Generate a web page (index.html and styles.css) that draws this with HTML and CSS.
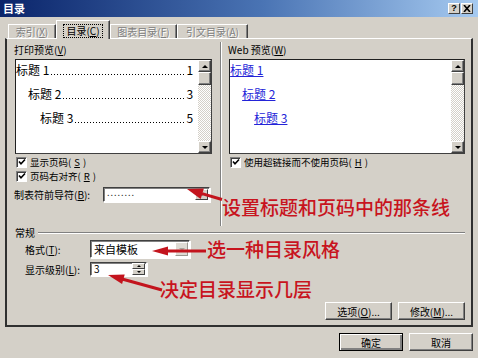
FILE: index.html
```html
<!DOCTYPE html>
<html lang="zh-CN">
<head>
  <meta charset="UTF-8"/>
  <title>目录</title>
  <link rel="stylesheet" href="styles.css">
</head>
<body>
<div class="window">

  <div class="titlebar">
    <span class="title">目录</span>
    <div class="caption-btns">
      <span class="cbtn">?</span>
      <span class="cbtn">
        <svg viewBox="0 0 8 7" width="8" height="7"><path d="M1,0 L7,7 M7,0 L1,7" stroke="#000" stroke-width="1.6"/></svg>
      </span>
    </div>
  </div>

  <div class="tabs">
    <span class="tab off t1">索引(<u>X</u>)</span>
    <span class="tab on t2"><span class="focus">目录(<u>C</u>)</span></span>
    <span class="tab off t3">图表目录(<u>F</u>)</span>
    <span class="tab off t4">引文目录(<u>A</u>)</span>
  </div>

  <div class="panel">
    <div class="top">
      <!-- print preview column -->
      <div class="col col-print">
        <div class="label">打印预览(<u>V</u>)</div>
        <div class="preview">
          <div class="pv-body">
            <div class="toc lv1"><span>标题 1</span><i class="dots"></i><span class="pg">1</span></div>
            <div class="toc lv2"><span>标题 2</span><i class="dots"></i><span class="pg">3</span></div>
            <div class="toc lv3"><span>标题 3</span><i class="dots"></i><span class="pg">5</span></div>
          </div>
          <div class="scrollbar">
            <span class="sbtn up"></span>
            <span class="sthumb"></span>
            <span class="strack"></span>
            <span class="sbtn down"></span>
          </div>
        </div>
        <div class="check first"><span class="box"><svg viewBox="0 0 8 8" width="8" height="8"><path d="M1,3.5 L3,5.8 L7,1.5" stroke="#000" stroke-width="1.6" fill="none"/></svg></span>显示页码(<u>S</u>)</div>
        <div class="check"><span class="box"><svg viewBox="0 0 8 8" width="8" height="8"><path d="M1,3.5 L3,5.8 L7,1.5" stroke="#000" stroke-width="1.6" fill="none"/></svg></span>页码右对齐(<u>R</u>)</div>
        <div class="field leader-row">
          <span class="flabel">制表符前导符(<u>B</u>):</span>
          <div class="combo leader"><span class="cval">........</span><span class="drop"></span></div>
        </div>
      </div>

      <div class="sep"></div>

      <!-- web preview column -->
      <div class="col col-web">
        <div class="label">Web 预览(<u>W</u>)</div>
        <div class="preview">
          <div class="pv-body">
            <div class="toc lv1"><a>标题 1</a></div>
            <div class="toc lv2"><a>标题 2</a></div>
            <div class="toc lv3"><a>标题 3</a></div>
          </div>
          <div class="scrollbar">
            <span class="sbtn up"></span>
            <span class="sthumb"></span>
            <span class="strack"></span>
            <span class="sbtn down"></span>
          </div>
        </div>
        <div class="check first"><span class="box"><svg viewBox="0 0 8 8" width="8" height="8"><path d="M1,3.5 L3,5.8 L7,1.5" stroke="#000" stroke-width="1.6" fill="none"/></svg></span>使用超链接而不使用页码(<u>H</u>)</div>
        <div class="note note-leader">设置标题和页码中的那条线</div>
      </div>
    </div>

    <!-- general group -->
    <div class="group">
      <div class="legend"><span>常规</span></div>
      <div class="field fmt-row">
        <span class="flabel">格式(<u>T</u>):</span>
        <div class="combo fmt"><span class="cval">来自模板</span><span class="drop pale"></span></div>
        <span class="note note-fmt">选一种目录风格</span>
      </div>
      <div class="field lvl-row">
        <span class="flabel">显示级别(<u>L</u>):</span>
        <div class="spin"><span class="cval">3</span><span class="spin-btns"><span class="sbtn up"></span><span class="sbtn down"></span></span></div>
      </div>
      <div class="note note-levels">决定目录显示几层</div>
      <div class="actions">
        <span class="btn">选项(<u>O</u>)...</span>
        <span class="btn">修改(<u>M</u>)...</span>
      </div>
    </div>
  </div>

  <div class="footer">
    <span class="btn default">确定</span>
    <span class="btn">取消</span>
  </div>

  <!-- red annotation arrows -->
  <svg class="arrows" viewBox="0 0 478 358" width="478" height="358">
    <g fill="#c3141d" stroke="#c3141d">
      <path d="M202,193.6 L222,199.5" stroke-width="3" fill="none"/>
      <polygon points="187,189 203.9,188.4 200.7,199" stroke="none"/>
      <path d="M166,251 L206,251" stroke-width="3" fill="none"/>
      <polygon points="152,251 168,246.5 168,255.5" stroke="none"/>
      <path d="M122,279 L162,290" stroke-width="3" fill="none"/>
      <polygon points="108,275 124.7,274.5 122.1,284.1" stroke="none"/>
    </g>
  </svg>
</div>
</body>
</html>
```

FILE: styles.css
```css
/* --- Reset & base --- */
* { box-sizing: border-box; margin: 0; padding: 0; }
body {
  background: #d4d0c8;
  font-family: "Noto Sans CJK SC", "Liberation Sans", sans-serif;
  font-size: 10px;
  color: #000;
}
u { text-decoration: underline; }

.window {
  position: relative;
  width: 478px; height: 358px;
  overflow: hidden;
}

/* --- Title bar --- */
.titlebar {
  height: 17px;
  display: flex; align-items: center; justify-content: space-between;
  padding: 0 5px 0 3px;
  background: linear-gradient(90deg, #0a246a 0%, #4a74b4 55%, #a6caf0 100%);
}
.title { color: #fff; font-weight: bold; font-size: 11px; line-height: 17px; }
.caption-btns { display: flex; gap: 1px; }
.cbtn {
  width: 12px; height: 11px;
  display: flex; align-items: center; justify-content: center;
  background: #d4d0c8;
  border: 1px solid; border-color: #fff #404040 #404040 #fff;
  font: bold 9px "Liberation Sans", sans-serif;
  line-height: 9px;
}

/* --- Tabs --- */
.tabs {
  display: flex; align-items: flex-end;
  height: 20px; margin-top: 1px;
  padding-left: 8px;
}
.tab {
  height: 14px;
  line-height: 13px;
  text-align: center;
  border-top: 1px solid #fff;
  border-left: 1px solid #fff;
  border-right: 1px solid #404040;
  box-shadow: inset -1px 0 #808080;
  white-space: nowrap;
}
.tab.off { color: #808080; text-shadow: 1px 1px 0 #fff; }
.tab.on {
  height: 19px; margin-bottom: -1px;
  padding-top: 3px;
  background: #d4d0c8;
  z-index: 2;
}
.focus { outline: 1px dotted #000; outline-offset: 0; padding: 0 2px; display: inline-block; line-height: 12px; }
.t1 { width: 48px; }
.t2 { width: 54px; }
.t3 { width: 67px; }
.t4 { width: 71px; }

/* --- Tab panel --- */
.panel {
  margin: 0 5px;
  height: 289px;
  border-style: solid;
  border-width: 1px 2px 2px 2px;
  border-color: #fff #303030 #303030 #303030;
  padding: 0 6px 0 7px;
  position: relative;
}
.top { display: flex; height: 187px; }
.col { padding-top: 4px; }
.col-print { width: 199px; }
.col-web { width: 238px; margin-left: 6px; }
.sep {
  margin-left: 8px; margin-top: 3px;
  height: 184px;
  border-left: 1px solid #808080;
  border-right: 1px solid #fff;
}
.label { height: 14px; line-height: 14px; white-space: nowrap; }

/* --- Preview boxes --- */
.preview {
  margin-top: 2px; margin-left: 1px;
  height: 95px;
  display: flex;
  border: 1px solid #404040;
  border-top-color: #202020; border-left-color: #202020;
}
.pv-body { flex: 1; background: #fff; padding-top: 1px; overflow: hidden; }
.toc {
  height: 24px;
  display: flex; align-items: baseline;
  font-size: 12px; line-height: 18px;
  padding-right: 5px;
  white-space: nowrap;
}
.toc.lv2 { padding-left: 12px; }
.toc.lv3 { padding-left: 24px; }
.dots {
  flex: 1; align-self: stretch;
  margin: 0 1px 0 2px;
  background-image: linear-gradient(90deg, #000 1px, transparent 1px);
  background-size: 3px 1px;
  background-repeat: repeat-x;
  background-position: 0 13px;
}
.toc a { color: #2424d8; text-decoration: underline; }

/* --- Scrollbar --- */
.scrollbar {
  width: 13px;
  display: flex; flex-direction: column;
  background: repeating-conic-gradient(#fff 0 25%, #d4d0c8 0 50%) 0 0 / 2px 2px;
}
.sbtn, .sthumb {
  display: flex; align-items: center; justify-content: center;
  background: #d4d0c8;
  border: 1px solid; border-color: #fff #404040 #404040 #fff;
  box-shadow: inset -1px -1px #808080;
}
.scrollbar .sbtn { height: 12px; }
.sthumb { height: 13px; }
.strack { flex: 1; }
.sbtn.up::before, .sbtn.down::before {
  content: "";
  border-left: 3px solid transparent;
  border-right: 3px solid transparent;
}
.sbtn.up::before { border-bottom: 3px solid #000; }
.sbtn.down::before { border-top: 3px solid #000; }

/* --- Checkboxes --- */
.check {
  display: flex; align-items: center; gap: 3px;
  height: 14px; line-height: 14px;
  font-size: 9.5px;
  margin-left: 2px;
  white-space: nowrap;
}
.check.first { margin-top: 1px; }
.box {
  width: 11px; height: 11px;
  display: flex; align-items: center; justify-content: center;
  background: #fff;
  border: 1px solid; border-color: #808080 #fff #fff #808080;
  box-shadow: inset 1px 1px #404040;
}

/* --- Fields --- */
.field { display: flex; align-items: center; white-space: nowrap; }
.leader-row { margin-top: 4px; }
.leader-row .flabel { width: 89px; }
.combo, .spin {
  display: flex; align-items: center;
  background: #fff;
  border: 1px solid; border-color: #404040 #fff #fff #404040;
  box-shadow: 1px 1px 0 #fff, inset 1px 1px #808080;
}
.cval { flex: 1; padding-left: 3px; line-height: 12px; }
.leader { width: 107px; height: 15px; }
.leader .cval { letter-spacing: 1px; color: #333; font-size: 9px; line-height: 8px; padding-bottom: 4px; }
.drop {
  width: 13px; align-self: stretch;
  margin: 1px;
  display: flex; align-items: center; justify-content: center;
  background: #d4d0c8;
  border: 1px solid; border-color: #fff #404040 #404040 #fff;
}
.drop::before {
  content: "";
  border-left: 3px solid transparent;
  border-right: 3px solid transparent;
  border-top: 3px solid #606060;
}
.drop.pale { background: #dedbd4; border-color: #fff #9a9890 #9a9890 #fff; }
.drop.pale::before { border-top-color: #a8a69e; }

/* --- General group --- */
.legend { display: flex; align-items: center; height: 14px; line-height: 14px; padding-left: 1px; }
.legend::after {
  content: "";
  flex: 1; margin-left: 3px;
  border-top: 1px solid #808080;
  border-bottom: 1px solid #fff;
}
.field .flabel { flex: none; }
.fmt-row, .lvl-row { padding-left: 11px; }
.fmt-row .flabel, .lvl-row .flabel { width: 65px; }
.fmt-row { height: 18px; }
.fmt { width: 100px; height: 18px; }
.fmt .cval { font-size: 11px; }
.lvl-row { margin-top: 4px; height: 14px; }
.spin { width: 57px; height: 14px; }
.spin-btns { width: 13px; align-self: stretch; display: flex; flex-direction: column; margin: 0 1px 0 0; }
.spin-btns .sbtn { flex: 1; border-width: 1px; box-shadow: none; }
.spin-btns .sbtn::before { border-left-width: 2px; border-right-width: 2px; }
.spin-btns .sbtn.up::before { border-bottom-width: 2px; }
.spin-btns .sbtn.down::before { border-top-width: 2px; }

/* --- Red annotations --- */
.note {
  color: #c8141e;
  font-size: 19px;
  font-weight: 500;
  white-space: nowrap;
}
.note-leader { margin: 27px 0 0 -6px; line-height: 22px; }
.note-fmt { margin-left: 17px; line-height: 18px; }
.note-levels { margin: 3px 0 0 146px; line-height: 20px; height: 20px; }
.arrows { position: absolute; left: 0; top: 0; pointer-events: none; }

/* --- Buttons --- */
.btn {
  height: 18px;
  display: flex; align-items: center; justify-content: center;
  background: #d4d0c8;
  border: 1px solid; border-color: #fff #404040 #404040 #fff;
  box-shadow: inset -1px -1px #808080;
  white-space: nowrap;
}
.actions { display: flex; justify-content: flex-end; gap: 6px; margin-top: 3px; }
.actions .btn { width: 67px; }
.footer { display: flex; justify-content: flex-end; gap: 6px; margin-top: 6px; padding-right: 5px; }
.footer .btn { width: 64px; }
.btn.default { border-color: #000; box-shadow: inset 1px 1px #fff, inset -2px -2px #808080; }
```
